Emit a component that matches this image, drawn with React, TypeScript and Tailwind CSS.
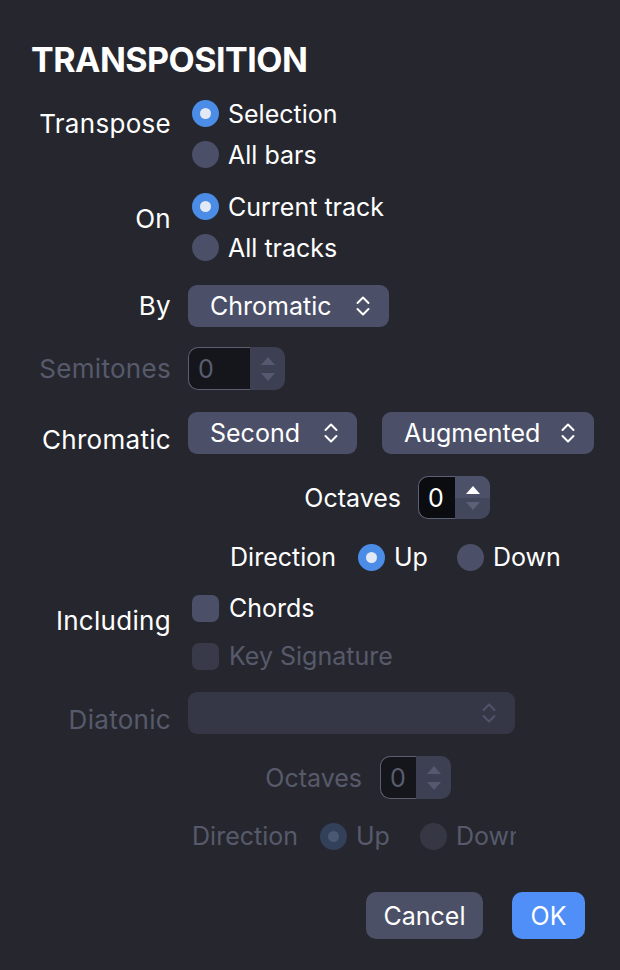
import React from "react";

const FONT = { fontFamily: "Inter, 'Liberation Sans', sans-serif" };

function Radio({ checked = false, disabled = false }: { checked?: boolean; disabled?: boolean }) {
  if (checked) {
    return (
      <div
        className={`flex h-[27px] w-[27px] shrink-0 items-center justify-center rounded-full ${
          disabled ? "bg-[#33405a]" : "bg-[#4a8ce6]"
        }`}
      >
        <div className={`h-[11px] w-[11px] rounded-full ${disabled ? "bg-[#4b5873]" : "bg-[#e3e9f4]"}`} />
      </div>
    );
  }
  return <div className={`h-[27px] w-[27px] shrink-0 rounded-full ${disabled ? "bg-[#353745]" : "bg-[#4b4f67]"}`} />;
}

function Checkbox({ disabled = false }: { disabled?: boolean }) {
  return <div className={`h-[27px] w-[27px] shrink-0 rounded-[7px] ${disabled ? "bg-[#383a49]" : "bg-[#4b4f67]"}`} />;
}

function Chevrons({ color = "#ffffff" }: { color?: string }) {
  return (
    <svg width="16" height="24" viewBox="0 0 16 24" fill="none">
      <path d="M2.5 9 L8 3.5 L13.5 9" stroke={color} strokeWidth="2" strokeLinecap="round" strokeLinejoin="round" />
      <path d="M2.5 15 L8 20.5 L13.5 15" stroke={color} strokeWidth="2" strokeLinecap="round" strokeLinejoin="round" />
    </svg>
  );
}

function Select({ label, width, disabled = false }: { label: string; width: string; disabled?: boolean }) {
  return (
    <div
      className={`flex h-[42px] items-center justify-between rounded-[9px] pl-[22px] pr-[18px] ${width} ${
        disabled ? "bg-[#353747]" : "bg-[#4b4f67] text-white"
      }`}
    >
      <span>{label}</span>
      <Chevrons color={disabled ? "#50546a" : "#ffffff"} />
    </div>
  );
}

function Tri({ up, color }: { up: boolean; color: string }) {
  return (
    <svg width="14" height="8" viewBox="0 0 14 8">
      <path d={up ? "M0 8 L7 0 L14 8 Z" : "M0 0 L7 8 L14 0 Z"} fill={color} />
    </svg>
  );
}

function Spin({ field, disabled = false }: { field: string; disabled?: boolean }) {
  return (
    <div className="flex h-[43px]">
      <div
        className={`flex items-center rounded-l-[10px] border-[1.5px] border-r-0 pl-[9px] ${field} ${
          disabled ? "border-[#5c5f72] bg-[#15161c] text-[#5a5d6e]" : "border-[#5d6176] bg-[#0b0c0f] text-white"
        }`}
      >
        0
      </div>
      <div
        className={`flex w-[35px] flex-col overflow-hidden rounded-r-[10px] ${disabled ? "bg-[#3d4052]" : "bg-[#43475b]"}`}
      >
        <div className={`flex flex-1 items-end justify-center pb-[4px] ${disabled ? "" : "bg-[#4c5068]"}`}>
          <Tri up color={disabled ? "#555970" : "#ffffff"} />
        </div>
        <div className="flex flex-1 items-start justify-center pt-[4px]">
          <Tri up={false} color={disabled ? "#555970" : "#5d6178"} />
        </div>
      </div>
    </div>
  );
}

export default function App() {
  // left column labels render a touch wider than the control text
  const label = "w-[171px] shrink-0 text-right text-[26px] tracking-[0.3px]";
  const dim = "text-[#565a6b]";
  return (
    <div className="h-[970px] w-[620px] overflow-hidden bg-[#26272e] text-[25px] leading-[30px] text-white" style={FONT}>
      <div className="pl-[31px] pt-[40px] text-[34px] font-bold leading-[40px] tracking-[-0.5px]">TRANSPOSITION</div>

      {/* Transpose */}
      <div className="mt-[13px] flex items-start gap-[17px]">
        <div className={`${label} pt-[16px]`}>Transpose</div>
        <div className="flex flex-col pl-[4px]">
          <div className="flex h-[41px] items-center gap-[9px]">
            <Radio checked />
            <span>Selection</span>
          </div>
          <div className="flex h-[41px] items-center gap-[9px]">
            <Radio />
            <span>All bars</span>
          </div>
        </div>
      </div>

      {/* On */}
      <div className="mt-[11px] flex items-start gap-[17px]">
        <div className={`${label} pt-[18px]`}>On</div>
        <div className="flex flex-col pl-[4px]">
          <div className="flex h-[41px] items-center gap-[9px]">
            <Radio checked />
            <span>Current track</span>
          </div>
          <div className="flex h-[41px] items-center gap-[9px]">
            <Radio />
            <span>All tracks</span>
          </div>
        </div>
      </div>

      {/* By */}
      <div className="mt-[17px] flex items-center gap-[17px]">
        <div className={label}>By</div>
        <Select label="Chromatic" width="w-[201px]" />
      </div>

      {/* Semitones */}
      <div className="mt-[20px] flex items-center gap-[17px]">
        <div className={`${label} ${dim}`}>Semitones</div>
        <Spin field="w-[62px]" disabled />
      </div>

      {/* Chromatic */}
      <div className="mt-[22px] flex items-start gap-[17px]">
        <div className={`${label} pt-[13px]`}>Chromatic</div>
        <div className="flex gap-[25px]">
          <Select label="Second" width="w-[169px]" />
          <Select label="Augmented" width="w-[212px]" />
        </div>
      </div>

      {/* Octaves */}
      <div className="mt-[21px] flex items-center gap-[17px]">
        <div className="w-[401px] shrink-0 text-right">Octaves</div>
        <Spin field="w-[37px]" />
      </div>

      {/* Direction */}
      <div className="mt-[23px] flex h-[30px] items-center">
        <div className="w-[336px] shrink-0 text-right">Direction</div>
        <div className="ml-[22px] flex items-center gap-[9px]">
          <Radio checked />
          <span>Up</span>
        </div>
        <div className="ml-[29px] flex items-center gap-[9px]">
          <Radio />
          <span>Down</span>
        </div>
      </div>

      {/* Including */}
      <div className="mt-[12px] flex items-start gap-[17px]">
        <div className={`${label} pt-[22px]`}>Including</div>
        <div className="flex flex-col pl-[4px]">
          <div className="flex h-[48px] items-center gap-[10px]">
            <Checkbox />
            <span>Chords</span>
          </div>
          <div className="flex h-[48px] items-center gap-[10px]">
            <Checkbox disabled />
            <span className={dim}>Key Signature</span>
          </div>
        </div>
      </div>

      {/* Diatonic */}
      <div className="mt-[12px] flex items-start gap-[17px]">
        <div className={`${label} ${dim} pt-[13px]`}>Diatonic</div>
        <Select label="" width="w-[327px]" disabled />
      </div>

      {/* Octaves (disabled) */}
      <div className="mt-[21px] flex items-center gap-[18px]">
        <div className={`w-[362px] shrink-0 text-right ${dim}`}>Octaves</div>
        <Spin field="w-[36px]" disabled />
      </div>

      {/* Direction (disabled), clipped at the select's right edge as in the dialog */}
      <div className="mt-[22px] flex h-[30px] w-[516px] items-center overflow-hidden whitespace-nowrap">
        <div className={`w-[298px] shrink-0 text-right ${dim}`}>Direction</div>
        <div className="ml-[22px] flex shrink-0 items-center gap-[9px]">
          <Radio checked disabled />
          <span className={dim}>Up</span>
        </div>
        <div className="ml-[30px] flex shrink-0 items-center gap-[9px]">
          <Radio disabled />
          <span className={dim}>Down</span>
        </div>
      </div>

      {/* Buttons */}
      <div className="mt-[41px] flex justify-end gap-[29px] pr-[35px]">
        <button className="h-[47px] w-[117px] rounded-[10px] bg-[#4b5066] text-white">Cancel</button>
        <button className="h-[47px] w-[73px] rounded-[10px] bg-[#4f8ff7] text-white">OK</button>
      </div>
    </div>
  );
}
